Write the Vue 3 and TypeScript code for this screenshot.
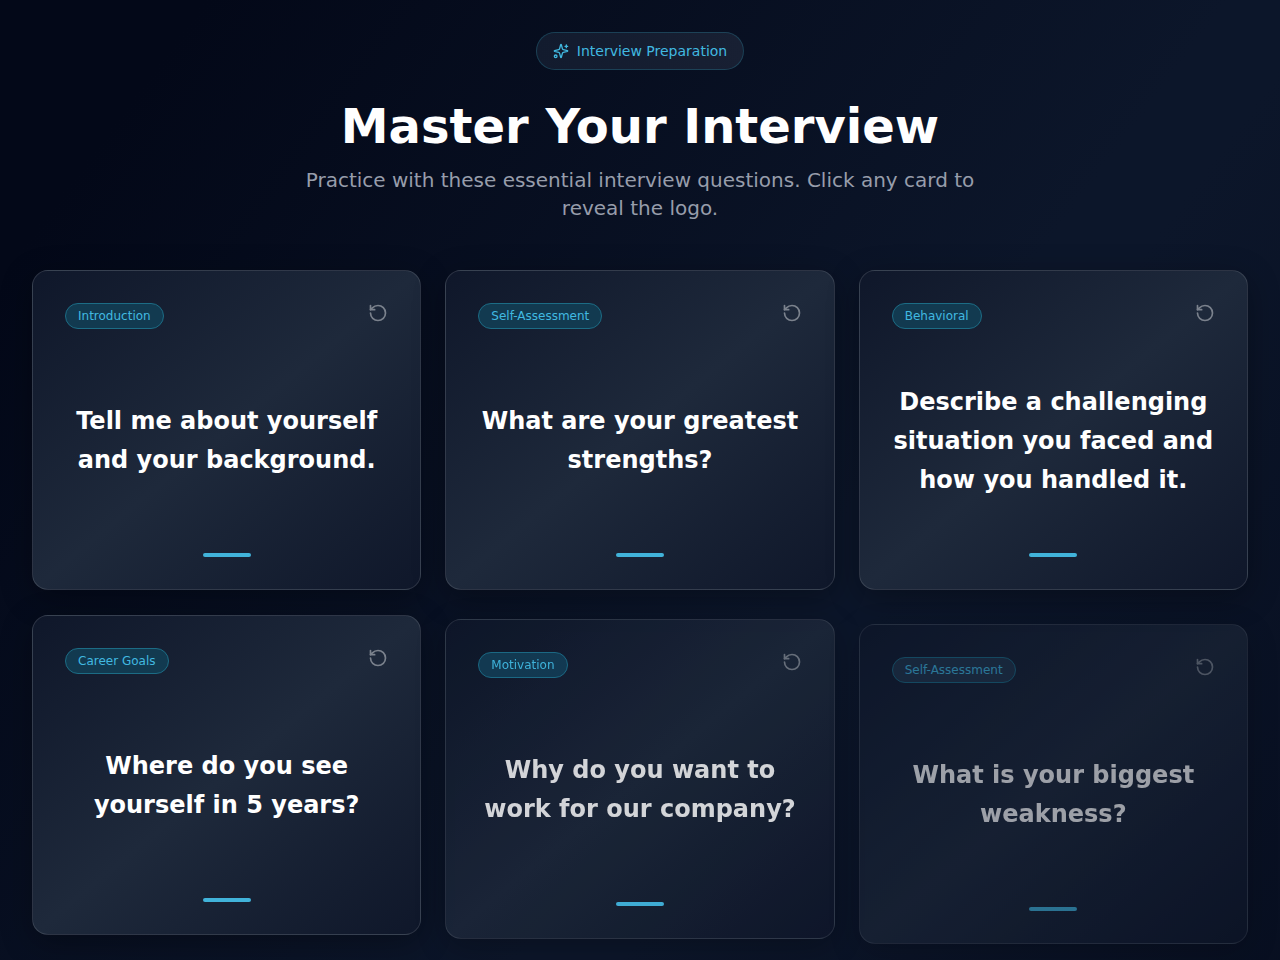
<script setup lang="ts">
import { ref } from 'vue'

interface Card {
  id: number
  category: string
  question: string
  state: string
}

const cards: Card[] = [
  { id: 1, category: 'Introduction', question: 'Tell me about yourself and your background.', state: 'shown' },
  { id: 2, category: 'Self-Assessment', question: 'What are your greatest strengths?', state: 'shown' },
  { id: 3, category: 'Behavioral', question: 'Describe a challenging situation you faced and how you handled it.', state: 'shown' },
  { id: 4, category: 'Career Goals', question: 'Where do you see yourself in 5 years?', state: 'settling' },
  { id: 5, category: 'Motivation', question: 'Why do you want to work for our company?', state: 'rising' },
  { id: 6, category: 'Self-Assessment', question: 'What is your biggest weakness?', state: 'entering' },
]

const selected = ref<number | null>(null)

function toggle(id: number): void {
  selected.value = selected.value === id ? null : id
}
</script>

<template>
  <main class="page">
    <header class="intro">
      <div class="eyebrow">
        <svg class="eyebrow-icon" viewBox="0 0 24 24" aria-hidden="true">
          <path d="M9.937 15.5A2 2 0 0 0 8.5 14.063l-6.135-1.582a.5.5 0 0 1 0-.962L8.5 9.936A2 2 0 0 0 9.937 8.5l1.582-6.135a.5.5 0 0 1 .963 0L14.063 8.5A2 2 0 0 0 15.5 9.937l6.135 1.581a.5.5 0 0 1 0 .964L15.5 14.063a2 2 0 0 0-1.437 1.437l-1.582 6.135a.5.5 0 0 1-.963 0z" />
          <path d="M20 3v4M22 5h-4" />
          <circle cx="4" cy="20" r="2" />
        </svg>
        <span>Interview Preparation</span>
      </div>
      <h1>Master Your Interview</h1>
      <p>Practice with these essential interview questions. Click any card to reveal the logo.</p>
    </header>

    <section class="grid" aria-label="Interview questions">
      <button
        v-for="card in cards"
        :key="card.id"
        type="button"
        class="card"
        :class="card.state"
        :aria-pressed="selected === card.id"
        @click="toggle(card.id)"
      >
        <span class="card-top">
          <span class="tag">{{ card.category }}</span>
          <svg class="flip" viewBox="0 0 24 24" aria-hidden="true">
            <path d="M3 12a9 9 0 1 0 9-9 9.75 9.75 0 0 0-6.74 2.74L3 8" />
            <path d="M3 3v5h5" />
          </svg>
        </span>
        <span class="question">{{ card.question }}</span>
        <span class="accent"></span>
      </button>
    </section>
  </main>
</template>

<style>
body {
  margin: 0;
  background: #020617;
}
</style>

<style scoped>
.page {
  box-sizing: border-box;
  min-height: 100vh;
  padding: 32px 32px 0;
  overflow: hidden;
  background: linear-gradient(to bottom right, #030818, #030818 8%, #0c162a 48%, #0c162a 52%, #040919) 0 0 / 100% 180% no-repeat;
  color: #fff;
  font-family: "DejaVu Sans", sans-serif;
}

.intro {
  display: flex;
  flex-direction: column;
  align-items: center;
  text-align: center;
}

.eyebrow {
  display: flex;
  align-items: center;
  gap: 8px;
  padding: 8px 16px;
  border: 1px solid rgba(48, 170, 200, 0.25);
  border-radius: 20px;
  background: linear-gradient(90deg, #121b2e, #182033);
  color: #41b9e0;
  font-size: 14px;
  line-height: 20px;
}

.eyebrow-icon,
.flip {
  flex: none;
  fill: none;
  stroke: currentColor;
  stroke-width: 2;
  stroke-linecap: round;
  stroke-linejoin: round;
}

.eyebrow-icon {
  width: 16px;
  height: 16px;
}

h1 {
  margin: 32px 0 16px;
  font-size: 48px;
  line-height: 48px;
  font-weight: 700;
}

.intro p {
  max-width: 672px;
  margin: 0;
  color: #979dab;
  font-size: 20px;
  line-height: 28px;
}

.grid {
  display: grid;
  grid-template-columns: repeat(3, minmax(0, 1fr));
  gap: 24px;
  margin-top: 48px;
}

.card {
  box-sizing: border-box;
  display: flex;
  flex-direction: column;
  align-items: center;
  justify-content: space-between;
  min-height: 320px;
  padding: 32px;
  border: 1px solid rgba(255, 255, 255, 0.12);
  border-radius: 16px;
  background: linear-gradient(to bottom right, #0f172a, #1e293b 50%, #0f172a);
  box-shadow: 0 8px 32px rgba(0, 0, 0, 0.3);
  color: #fff;
  font: inherit;
  text-align: center;
  cursor: pointer;
}

.card-top {
  display: flex;
  align-items: flex-start;
  justify-content: space-between;
  width: 100%;
}

.tag {
  padding: 4px 12px;
  border: 1px solid #1c6c85;
  border-radius: 13px;
  background: #123a50;
  color: #41b9e0;
  font-size: 12px;
  line-height: 16px;
}

.flip {
  width: 20px;
  height: 20px;
  color: #7b828d;
}

.question {
  font-size: 24px;
  line-height: 39px;
  font-weight: 700;
}

.accent {
  width: 48px;
  height: 4px;
  border-radius: 2px;
  background: #41b3da;
}

.settling {
  transform: translateY(1px);
}

.rising {
  opacity: 0.82;
  transform: translateY(5px);
}

.rising .tag,
.rising .accent {
  filter: brightness(1.15);
}

.entering {
  opacity: 0.6;
  transform: translateY(10px);
}

.entering .tag {
  background: #22344a;
}
</style>
